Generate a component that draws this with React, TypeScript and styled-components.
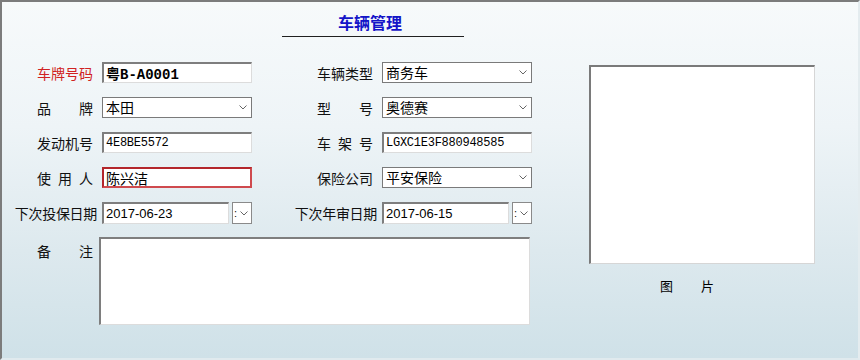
import React from 'react'
import styled, { createGlobalStyle } from 'styled-components'

const GlobalStyle = createGlobalStyle`
  html, body {
    margin: 0;
    padding: 0;
  }
  body {
    font-family: "Noto Sans CJK SC", "Noto Sans", sans-serif;
    color: #111;
  }
`

const Window = styled.div`
  box-sizing: border-box;
  width: 860px;
  height: 360px;
  border-top: 2px solid #7c7c7c;
  border-left: 2px solid #7c7c7c;
  border-right: 2px solid #e4ecef;
  border-bottom: 2px solid #e0eaee;
  background: linear-gradient(to bottom, #f7fafb 0%, #eef4f7 35%, #dde9ee 70%, #cfe1e8 100%);
  overflow: hidden;
`

const Header = styled.div`
  width: 182px;
  margin-left: 280px;
  padding: 10px 6px 4px 0;
  box-sizing: border-box;
  border-bottom: 1px solid #202020;
  text-align: center;
`

const Title = styled.h1`
  margin: 0;
  font-size: 16px;
  line-height: 20px;
  font-weight: 700;
  color: #1414c8;
`

const Body = styled.div`
  display: flex;
  align-items: flex-start;
  padding-left: 13px;
  margin-top: 25px;
`

const Form = styled.div`
  display: grid;
  grid-template-columns: 87px 150px 130px 150px;
  grid-template-rows: repeat(5, 21px) 88px;
  row-gap: 14px;
`

const LabelBox = styled.div<{ $long?: boolean; $red?: boolean; $top?: boolean }>`
  justify-self: end;
  align-self: ${(p) => (p.$top ? 'start' : 'center')};
  padding-top: ${(p) => (p.$top ? '4px' : '0')};
  margin-right: ${(p) => (p.$long ? '5px' : '9px')};
  width: ${(p) => (p.$long ? 'auto' : '56px')};
  display: flex;
  justify-content: space-between;
  font-size: 14px;
  line-height: 20px;
  white-space: nowrap;
  letter-spacing: ${(p) => (p.$long ? '-0.3px' : '0')};
  color: ${(p) => (p.$red ? '#d02222' : '#111')};
`

const Label = ({ text, long, red, top }: { text: string; long?: boolean; red?: boolean; top?: boolean }) => (
  <LabelBox $long={long} $red={red} $top={top}>
    {Array.from(text.replace(/ /g, '')).map((c, i) => (
      <span key={i}>{c}</span>
    ))}
  </LabelBox>
)

const fonts = {
  cjk: '"Noto Sans CJK SC", "Noto Sans", sans-serif',
  mono: '"Liberation Mono", "Noto Sans CJK SC", monospace',
  sans: '"Liberation Sans", Arial, sans-serif',
}

const TextInput = styled.input<{
  $font?: 'cjk' | 'mono' | 'sans'
  $size?: number
  $bold?: boolean
  $invalid?: boolean
  $tight?: boolean
}>`
  box-sizing: border-box;
  width: 100%;
  height: 21px;
  margin: 0;
  padding: 0 2px;
  align-self: center;
  border-style: solid;
  border-width: 2px 1px 1px 2px;
  border-color: #7e7e7e #dcdcdc #dcdcdc #7e7e7e;
  background: #fff;
  color: #000;
  outline: none;
  font-family: ${(p) => fonts[p.$font || 'cjk']};
  font-size: ${(p) => p.$size || 14}px;
  font-weight: ${(p) => (p.$bold ? 700 : 400)};
  letter-spacing: ${(p) => (p.$tight ? '-0.25px' : '0')};

  ${(p) =>
    p.$invalid &&
    `
    border-width: 2px;
    border-color: #b3262b #cf4a4e #cf4a4e #b3262b;
  `}
`

const SelectBox = styled.div`
  box-sizing: border-box;
  height: 21px;
  width: 100%;
  align-self: center;
  border: 1px solid #7a7a7a;
  background: #fff;
  display: flex;
  align-items: center;
  justify-content: space-between;
  padding: 0 4px 0 3px;
  font-size: 14px;
  line-height: 19px;
  color: #000;
`

const Chevron = () => (
  <svg width="8" height="5" viewBox="0 0 8 5">
    <polyline points="0.5,0.5 4,4 7.5,0.5" fill="none" stroke="#666" strokeWidth="1" />
  </svg>
)

const Select = ({ value }: { value: string }) => (
  <SelectBox>
    <span>{value}</span>
    <Chevron />
  </SelectBox>
)

const DateField = styled.div`
  display: flex;
  align-items: center;
  gap: 3px;
  height: 22px;
`

const DateInput = styled(TextInput)`
  width: 127px;
  height: 22px;
`

const DropButton = styled.div`
  box-sizing: border-box;
  width: 20px;
  height: 22px;
  border: 1px solid #8a8a8a;
  background: #fff;
  display: flex;
  align-items: center;
  padding-left: 1px;
  gap: 3px;
  font-family: ${fonts.sans};
  font-size: 11px;
  line-height: 11px;
`

const DatePicker = ({ value }: { value: string }) => (
  <DateField>
    <DateInput readOnly value={value} $font="sans" $size={13} />
    <DropButton>
      <span>:</span>
      <Chevron />
    </DropButton>
  </DateField>
)

const Notes = styled.textarea`
  grid-column: 2 / 5;
  justify-self: start;
  box-sizing: border-box;
  margin: 0 0 0 -3px;
  width: 431px;
  height: 88px;
  resize: none;
  border-style: solid;
  border-width: 2px 1px 1px 2px;
  border-color: #7e7e7e #dcdcdc #dcdcdc #7e7e7e;
  background: #fff;
  outline: none;
`

const PicturePanel = styled.div`
  margin-left: 57px;
  margin-top: 3px;
  display: flex;
  flex-direction: column;
`

const PictureBox = styled.div`
  box-sizing: border-box;
  width: 226px;
  height: 199px;
  background: #fff;
  border-style: solid;
  border-width: 2px 1px 1px 2px;
  border-color: #7a7a7a #d6d6d6 #d6d6d6 #7a7a7a;
`

const PictureLabel = styled.div`
  margin: 12px 0 0 71px;
  width: 54px;
  display: flex;
  justify-content: space-between;
  font-size: 13px;
  line-height: 20px;
  color: #000;
`

export default function App() {
  return (
    <>
      <GlobalStyle />
      <Window>
        <Header>
          <Title>车辆管理</Title>
        </Header>
        <Body>
          <Form>
            <Label text="车牌号码" red />
            <TextInput readOnly value="粤B-A0001" $font="mono" $bold />
            <Label text="车辆类型" />
            <Select value="商务车" />

            <Label text="品 牌" />
            <Select value="本田" />
            <Label text="型 号" />
            <Select value="奥德赛" />

            <Label text="发动机号" />
            <TextInput readOnly value="4E8BE5572" $font="mono" $size={12} $tight />
            <Label text="车 架 号" />
            <TextInput readOnly value="LGXC1E3F880948585" $font="mono" $size={12} $tight />

            <Label text="使 用 人" />
            <TextInput readOnly value="陈兴洁" $invalid />
            <Label text="保险公司" />
            <Select value="平安保险" />

            <Label text="下次投保日期" long />
            <DatePicker value="2017-06-23" />
            <Label text="下次年审日期" long />
            <DatePicker value="2017-06-15" />

            <Label text="备 注" top />
            <Notes readOnly />
          </Form>
          <PicturePanel>
            <PictureBox />
            <PictureLabel>
              <span>图</span>
              <span>片</span>
            </PictureLabel>
          </PicturePanel>
        </Body>
      </Window>
    </>
  )
}
